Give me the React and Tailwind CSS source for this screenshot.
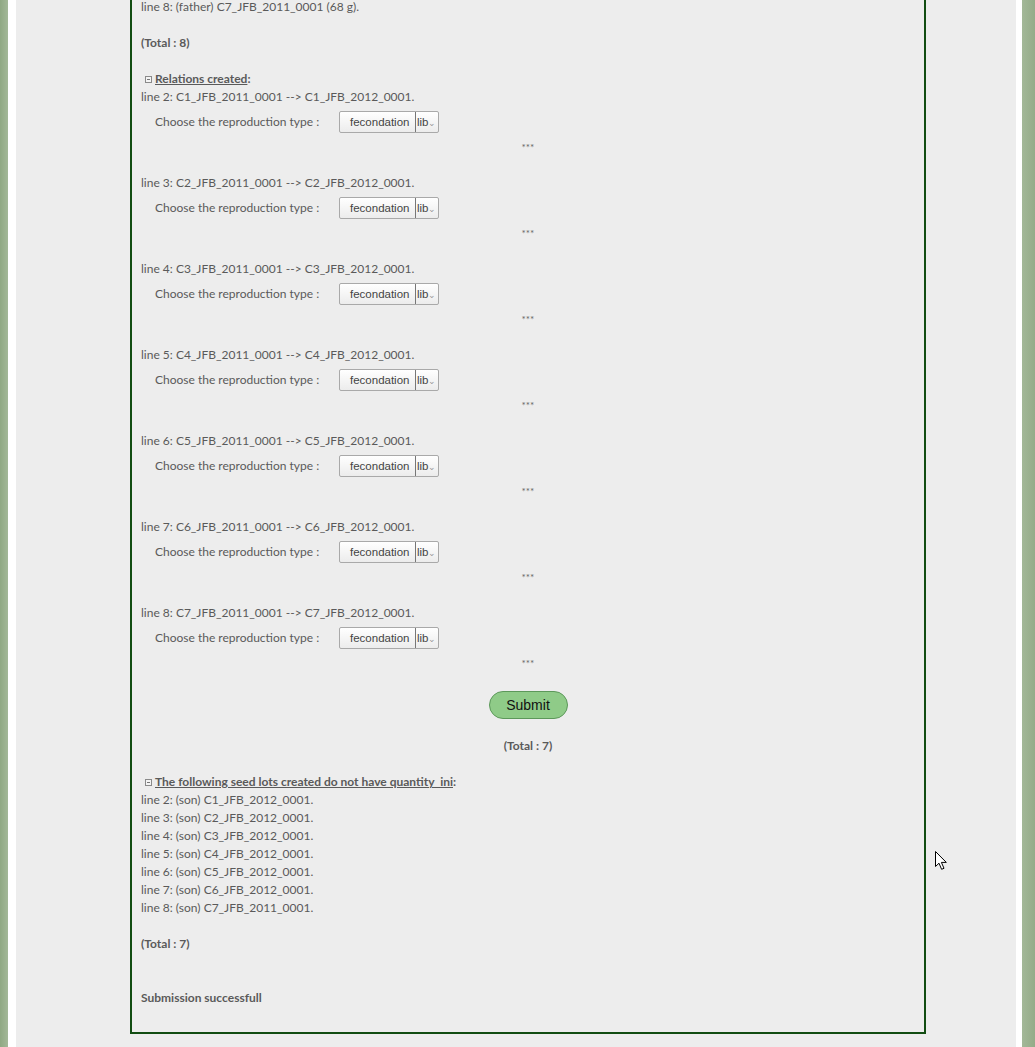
const relations = [
  { line: 2, from: "C1_JFB_2011_0001", to: "C1_JFB_2012_0001" },
  { line: 3, from: "C2_JFB_2011_0001", to: "C2_JFB_2012_0001" },
  { line: 4, from: "C3_JFB_2011_0001", to: "C3_JFB_2012_0001" },
  { line: 5, from: "C4_JFB_2011_0001", to: "C4_JFB_2012_0001" },
  { line: 6, from: "C5_JFB_2011_0001", to: "C5_JFB_2012_0001" },
  { line: 7, from: "C6_JFB_2011_0001", to: "C6_JFB_2012_0001" },
  { line: 8, from: "C7_JFB_2011_0001", to: "C7_JFB_2012_0001" },
];

const sons = [
  { line: 2, lot: "C1_JFB_2012_0001" },
  { line: 3, lot: "C2_JFB_2012_0001" },
  { line: 4, lot: "C3_JFB_2012_0001" },
  { line: 5, lot: "C4_JFB_2012_0001" },
  { line: 6, lot: "C5_JFB_2012_0001" },
  { line: 7, lot: "C6_JFB_2012_0001" },
  { line: 8, lot: "C7_JFB_2011_0001" },
];

// small "collapse" square before section titles
const Toggle = () => (
  <span className="inline-flex items-center justify-center w-[7px] h-[7px] border border-[#8a8a8a] bg-[#f4f4f4] ml-[4px] mr-[3px] align-middle">
    <span className="block w-[3px] h-px bg-[#777]"></span>
  </span>
);

const SectionTitle = ({ children }) => (
  <div className="h-[18px] flex items-center font-bold">
    <Toggle />
    <span className="underline">{children}</span>:
  </div>
);

const FakeSelect = () => (
  <div className="w-[100px] h-[22px] flex items-stretch border border-[#a9a9a9] rounded-[2px] bg-gradient-to-b from-white to-[#ececec] text-[11.5px] text-[#444] font-['Liberation_Sans',Arial,sans-serif] overflow-hidden">
    <span className="w-[75px] shrink-0 pl-[10px] flex items-center">fecondation</span>
    <span className="border-l border-[#777] pl-px flex items-center">lib</span>
    <span className="flex items-center text-[#999] text-[9px] -ml-px mt-[2px]">&#8964;</span>
  </div>
);

const Relation = ({ item }) => (
  <div>
    <div className="h-[18px] leading-[18px]">
      line {item.line}: {item.from} --&gt; {item.to}.
    </div>
    <div className="mt-[5px] h-[22px] flex items-center pl-[14px]">
      <span className="w-[184px]">Choose the reproduction type :</span>
      <FakeSelect />
    </div>
    <div className="mt-[5px] h-[18px] leading-[18px] text-center text-[10px] text-[#666]">***</div>
    <div className="h-[18px]"></div>
  </div>
);

const Cursor = () => (
  <svg className="absolute left-[935px] top-[851px]" width="13" height="20" viewBox="0 0 13 20">
    <path
      d="M0.5 0.5 L0.5 15.5 L4 12.2 L6.6 18.3 L9 17.3 L6.4 11.4 L11.3 11.4 Z"
      fill="#fff"
      stroke="#000"
      strokeWidth="1"
      strokeLinejoin="round"
    />
  </svg>
);

const App = () => {
  return (
    <div className="relative flex min-h-[1047px] h-[1047px] overflow-hidden bg-[#ededed]">
      {/* left frame */}
      <div className="w-[8px] bg-gradient-to-r from-[#8fa883] to-[#a3b898]"></div>
      <div className="w-[8px] bg-white"></div>

      {/* page */}
      <div className="flex-1 bg-[#ededed]">
        <div className="ml-[114px] w-[796px] -mt-[2px] border-2 border-t-0 border-[#124d12] pl-[9px] pr-[9px] pb-[25px] text-[12px] leading-[18px] text-[#5a5a5a] font-['Lato','DejaVu_Sans',sans-serif]">
          <div>line 8: (father) C7_JFB_2011_0001 (68 g).</div>
          <div className="h-[18px]"></div>
          <div className="font-bold">(Total : 8)</div>
          <div className="h-[18px]"></div>

          <SectionTitle>Relations created</SectionTitle>
          {relations.map((item) => (
            <Relation key={item.line} item={item} />
          ))}

          <div className="mt-[1px] flex justify-center">
            <button className="w-[79px] h-[28px] rounded-full border border-[#5c985a] bg-[#8fcb88] text-[14px] text-[#111] font-['Liberation_Sans',Arial,sans-serif]">
              Submit
            </button>
          </div>
          <div className="mt-[18px] text-center font-bold">(Total : 7)</div>
          <div className="h-[18px]"></div>

          <SectionTitle>The following seed lots created do not have quantity_ini</SectionTitle>
          {sons.map((s) => (
            <div key={s.line}>
              line {s.line}: (son) {s.lot}.
            </div>
          ))}
          <div className="h-[18px]"></div>
          <div className="font-bold">(Total : 7)</div>
          <div className="h-[36px]"></div>
          <div className="font-bold">Submission successfull</div>
        </div>
      </div>

      {/* right frame */}
      <div className="w-[6px] bg-white"></div>
      <div className="w-[13px] bg-gradient-to-r from-[#a3b898] to-[#94ab88]"></div>

      <Cursor />
    </div>
  );
};

export default App;
